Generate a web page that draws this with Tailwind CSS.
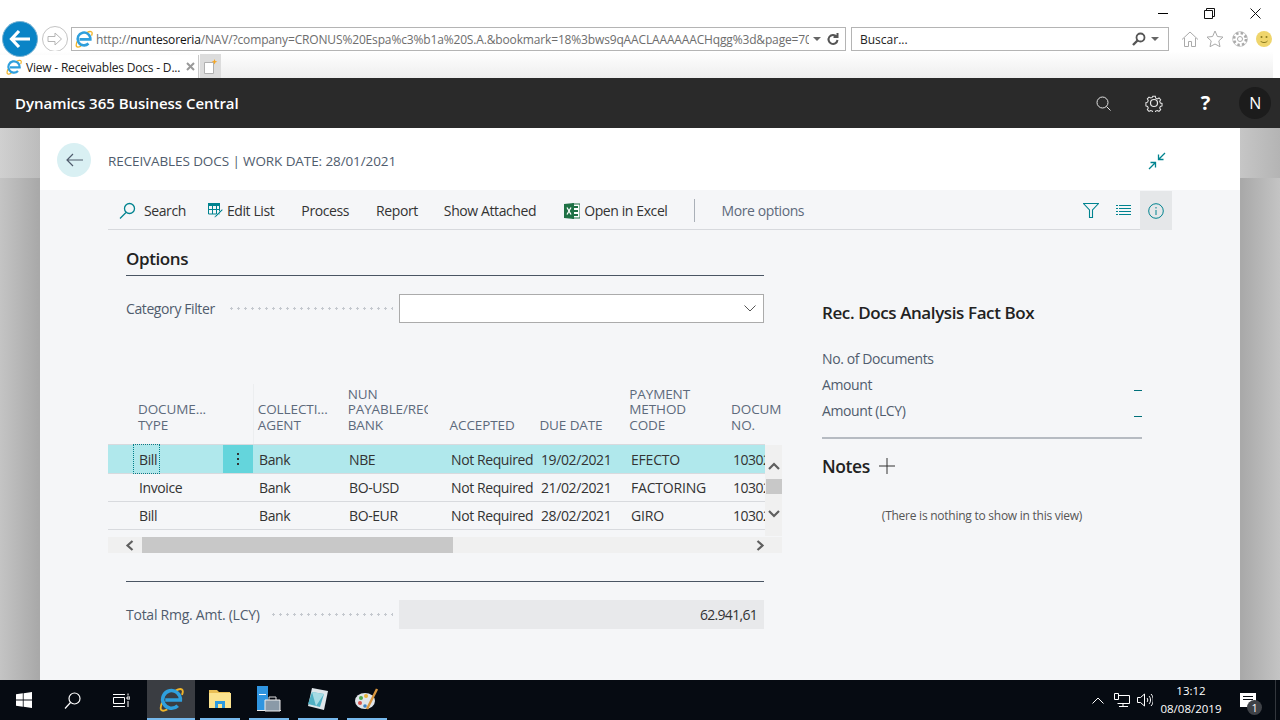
<!DOCTYPE html>
<html lang="en">
  <head>
    <meta charset="UTF-8" />
    <title>View - Receivables Docs - Dynamics 365 Business Central</title>
    <script src="https://cdn.jsdelivr.net/npm/@tailwindcss/browser@4"></script>
  </head>
  <body class="w-[1280px] h-[720px] overflow-hidden bg-white font-['Open_Sans','Liberation_Sans',sans-serif] text-[14px] tracking-[-0.4px] text-[#333]">
    <svg class="hidden">
      <symbol id="ie" viewBox="0 0 24 24">
        <path d="M3 15C0 22 2 24.500 8 21.500M16 3.500C21 .5 24.500 2 22 7.500" fill="none" stroke="#f0b429" stroke-width="1.800" />
        <path d="M6 12.500H20.500A8.500 8.500 0 1 0 18 18" fill="none" stroke="#2f9fdc" stroke-width="3.400" />
      </symbol>
    </svg>

    <!-- Browser chrome -->
    <div class="h-[78px] flex flex-col">
      <div class="h-[27px] flex justify-end items-start">
        <div class="w-[46px] h-[27px] flex items-center justify-center">
          <div class="w-[10px] h-px bg-black"></div>
        </div>
        <div class="w-[46px] h-[27px] flex items-center justify-center">
          <svg width="11" height="11" viewBox="0 0 11 11" fill="none" stroke="#111"><path d="M.5 2.500h8v8h-8zM2.500 2.500v-2h8v8h-2" /></svg>
        </div>
        <div class="w-[46px] h-[27px] flex items-center justify-center mr-[2px]">
          <svg width="11" height="11" viewBox="0 0 11 11" stroke="#111"><path d="M.5.500l10 10M10.500.500l-10 10" /></svg>
        </div>
      </div>
      <div class="h-[24px] flex items-center">
        <div class="ml-[2px] w-[36px] h-[36px] shrink-0 rounded-full bg-[#0a84c6] border border-[#7ab4d4] flex items-center justify-center relative z-10">
          <svg width="22" height="20" viewBox="0 0 22 20" fill="none" stroke="#fff" stroke-width="3.200"><path d="M10 2L2.500 10 10 18M3 10H21" /></svg>
        </div>
        <div class="ml-[4px] w-[26px] h-[26px] shrink-0 rounded-full border border-[#c4c4c4] flex items-center justify-center">
          <svg width="16" height="14" viewBox="0 0 16 14" fill="none" stroke="#b5b5b5"><path d="M1 4.500h7v-3.500l6.500 6-6.500 6v-3.500h-7z" /></svg>
        </div>
        <div class="ml-[3px] w-[775px] h-[24px] shrink-0 border border-[#b4b4b4] flex items-center text-[12px] tracking-[-0.15px]">
          <svg class="ml-[3px] shrink-0" width="18" height="18"><use href="#ie" /></svg>
          <div class="ml-[3px] pt-[2px] w-[713px] overflow-hidden whitespace-nowrap text-[#6d6d6d]">http://<span class="text-[#111]">nuntesoreria</span>/NAV/?company=CRONUS%20Espa%c3%b1a%20S.A.&amp;bookmark=18%3bws9qAACLAAAAAACHqgg%3d&amp;page=70</div>
          <div class="ml-[4px] w-0 h-0 border-x-[4px] border-x-transparent border-t-[4px] border-t-[#666]"></div>
          <svg class="ml-[6px]" width="12" height="13" viewBox="0 0 12 13" fill="none" stroke="#555" stroke-width="2"><path d="M9.500 3.500A4.500 4.500 0 1 0 10.500 7M10.500 0v4h-4" /></svg>
        </div>
        <div class="ml-[5px] w-[318px] h-[24px] shrink-0 border border-[#b4b4b4] flex items-center text-[12px] tracking-[0px] text-[#222]">
          <span class="ml-[8px] pt-[2px] flex-1">Buscar...</span>
          <svg width="14" height="14" viewBox="0 0 14 14" fill="none" stroke="#555"><circle cx="8.500" cy="5.500" r="4" stroke-width="1.800" /><path d="M5.500 8.500L1 13" stroke-width="2.400" /></svg>
          <div class="ml-[5px] mr-[9px] w-0 h-0 border-x-[4px] border-x-transparent border-t-[4px] border-t-[#666]"></div>
        </div>
        <div class="ml-[12px] flex items-center gap-[7px]">
          <svg width="18" height="18" viewBox="0 0 18 18" fill="none" stroke="#aaa"><path d="M1 9.500L9 2l8 7.500M3.500 8v8.500h4v-5h3v5h4V8" /></svg>
          <svg width="18" height="18" viewBox="0 0 18 18" fill="none" stroke="#aaa"><path d="M9 1l2.400 5.500 5.600.6-4.200 3.800 1.200 5.800L9 14l-5 2.700 1.200-5.800L1 7.100l5.600-.6z" /></svg>
          <svg width="18" height="18" viewBox="0 0 18 18" fill="none" stroke="#aaa"><circle cx="9" cy="9" r="2.500" /><circle cx="9" cy="9" r="6" stroke-width="2.600" stroke-dasharray="2.500 2.200" /><circle cx="9" cy="9" r="7.400" stroke-width=".6" /></svg>
          <svg width="16" height="16" viewBox="0 0 16 16" fill="none"><circle cx="8" cy="8" r="8" fill="#efd56c" /><circle cx="5.500" cy="6" r="1" fill="#8a7a20" /><circle cx="10.500" cy="6" r="1" fill="#8a7a20" /><path d="M4.500 10c1.500 2 5.500 2 7 0" stroke="#8a7a20" /></svg>
        </div>
      </div>
      <div class="flex-1 flex items-end bg-gradient-to-b from-white to-[#eeeeee] mr-[7px]">
        <div class="w-[199px] h-[23px] bg-white border-r border-[#c8c8c8] flex items-center text-[12px] tracking-[-0.2px] text-[#222]">
          <svg class="ml-[6px] shrink-0" width="16" height="16"><use href="#ie" /></svg>
          <span class="ml-[4px] pt-[2px] flex-1 whitespace-nowrap">View - Receivables Docs - D...</span>
          <svg class="mx-[6px] shrink-0" width="9" height="9" viewBox="0 0 9 9" stroke="#999" stroke-width="2"><path d="M1 1l7 7M8 1L1 8" /></svg>
        </div>
        <div class="ml-px w-[21px] h-[24px] bg-[#dcdcdc] flex items-center justify-center">
          <svg width="14" height="15" viewBox="0 0 14 15"><path d="M.5 3.500h9v11h-9z" fill="#fff" stroke="#b0b0b0" /><path d="M10.500 0l.8 2 2 .8-2 .8-.8 2-.8-2-2-.8 2-.8z" fill="#f5a623" /></svg>
        </div>
      </div>
    </div>

    <!-- App header -->
    <div class="h-[50px] bg-[#2a2a2a] flex items-center text-white">
      <div class="ml-[15px] flex-1 text-[15px] font-semibold tracking-[-0.03px]">Dynamics 365 Business Central</div>
      <svg class="mr-[34px]" width="15" height="15" viewBox="0 0 15 15" fill="none" stroke="#e4e4e4"><circle cx="6.500" cy="6.500" r="5.500" /><path d="M10.500 10.500l4 4" /></svg>
      <svg class="mr-[38px]" width="18" height="18" viewBox="0 0 18 18" fill="none" stroke="#e8e8e8" stroke-width="1.200"><circle cx="9" cy="9" r="3.500" /><path d="M7.500 1h3l.5 2.200 1.900.8 2-1.100 2 2.100-1.200 1.900.8 2 2 .6v2.900l-2 .6-.8 1.900 1.200 2-2 2-2-1.100-2 .8-.5 2h-3l-.5-2-1.900-.8-2 1.100-2-2 1.100-2-.8-1.900-2-.6V8.500l2-.6.8-2-1.100-1.900 2-2.100 2 1.100 1.900-.8z" transform="translate(1.500 1.500) scale(.84)" /></svg>
      <div class="mr-[29px] text-[20px] font-bold leading-none">?</div>
      <div class="mr-[9px] w-[32px] h-[32px] rounded-full bg-[#1c1c1c] flex items-center justify-center text-[16px]">N</div>
    </div>

    <!-- Page -->
    <div class="h-[552px] flex bg-[linear-gradient(90deg,#c4c4c4,#a9a9a9_3%,#a9a9a9_97%,#c4c4c4)]">
      <div class="w-[40px] shrink-0 flex flex-col"><div class="h-[50px] bg-[linear-gradient(90deg,#d0d0d0,#bcbcbc)]"></div></div>
      <div class="w-[1200px] shrink-0 flex flex-col bg-[#f5f6f8]">
        <div class="h-[62px] pt-[2px] bg-white flex items-center">
          <div class="ml-[17px] w-[34px] h-[34px] rounded-full bg-[#d9f0f3] flex items-center justify-center">
            <svg width="17" height="14" viewBox="0 0 17 14" fill="none" stroke="#505c6d" stroke-width="1.200"><path d="M7 1L1 7l6 6M1 7h16" /></svg>
          </div>
          <div class="ml-[17px] pt-[2px] flex-1 text-[13.500px] tracking-[-0.1px] text-[#505c6d]">RECEIVABLES DOCS | WORK DATE: 28/01/2021</div>
          <svg class="mr-[74px] mt-[2px]" width="18" height="18" viewBox="0 0 18 18" fill="none" stroke="#00838f" stroke-width="1.300"><path d="M1 17l6-6M2.500 10.500H7.500V15.500M17 1l-6 6M15.500 7.500H10.500V2.500" /></svg>
        </div>

        <!-- Action bar -->
        <div class="mx-[68px] h-[40px] pt-[2px] border-b border-[#d7d9dd] flex items-center text-[#333]">
          <svg class="ml-[11px]" width="17" height="17" viewBox="0 0 17 17" fill="none" stroke="#00838f" stroke-width="1.300"><circle cx="10.500" cy="6.500" r="5" /><path d="M7 10.500L1 16.500" /></svg>
          <span class="ml-[8px]">Search</span>
          <svg class="ml-[22px]" width="15" height="15" viewBox="0 0 15 15"><path d="M.5 1h11v10h-11z" fill="none" stroke="#00838f" /><path d="M0 0h12v3H0zM4 3h1v8H4zM8 3h1v8H8zM0 6h12v1H0z" fill="#00838f" /><path d="M7 13l7-7 1 1-7 7-2 .5z" fill="#00838f" stroke="#f5f6f8" stroke-width=".5" /></svg>
          <span class="ml-[4px]">Edit List</span>
          <span class="ml-[27px]">Process</span>
          <span class="ml-[27px]">Report</span>
          <span class="ml-[26px]">Show Attached</span>
          <svg class="ml-[28px]" width="16" height="16" viewBox="0 0 16 16"><path d="M8 1h8v14H8z" fill="#fff" stroke="#1e7145" /><path d="M10 3h4v2h-4zM10 7h4v2h-4zM10 11h4v2h-4z" fill="#1e7145" /><path d="M0 1l10-1v16L0 15z" fill="#1e7145" /><path d="M3 4.500l4 7M7 4.500l-4 7" stroke="#fff" stroke-width="1.300" /></svg>
          <span class="ml-[4px]">Open in Excel</span>
          <div class="ml-[27px] w-px h-[23px] bg-[#aab0b8]"></div>
          <span class="ml-[26px] text-[#5d6a7c]">More options</span>
          <div class="flex-1"></div>
          <svg width="16" height="15" viewBox="0 0 16 15" fill="none" stroke="#00838f" stroke-width="1.100"><path d="M.5.500h15l-6 6.500v7.500h-3V7z" /></svg>
          <svg class="ml-[17px]" width="15" height="11" viewBox="0 0 15 11" fill="none" stroke="#00838f"><path d="M0 .5h2M3 .5h12M0 3.500h2M3 3.500h12M0 6.500h2M3 6.500h12M0 9.500h2M3 9.500h12" /></svg>
          <div class="ml-[9px] -mt-[1px] w-[32px] h-[38px] box-content pt-[1px] bg-[#e5e7e9] flex items-center justify-center">
            <svg width="16" height="16" viewBox="0 0 16 16" fill="none" stroke="#00838f"><circle cx="8" cy="8" r="7.300" /><path d="M8 7v5M8 4v1.500" /></svg>
          </div>
        </div>

        <div class="ml-[68px] flex">
          <!-- Left column -->
          <div class="w-[674px] shrink-0">
            <div class="mx-[18px] w-[638px] h-[46px] border-b border-[#4a5563] flex items-end pb-[4px] text-[17px] font-semibold text-[#222]">Options</div>
            <div class="ml-[18px] w-[638px] h-[29px] mt-[18px] flex items-center text-[#505c6d]">
              <span class="whitespace-nowrap">Category Filter</span>
              <div class="ml-[13px] mr-[6px] flex-1 h-[3px] bg-[radial-gradient(circle,#c4c8ce_1px,transparent_1.200px)] bg-[length:7px_3px]"></div>
              <div class="w-[365px] h-[29px] shrink-0 bg-white border border-[#ababab] flex items-center justify-end pr-[7px]">
                <svg width="12" height="7" viewBox="0 0 12 7" fill="none" stroke="#555"><path d="M.5.500L6 6 11.500.500" /></svg>
              </div>
            </div>

            <!-- Grid header -->
            <div class="mt-[61px] h-[61px] flex items-end text-[13.500px] leading-[15.500px] tracking-[-0.1px] text-[#5d6a7c] uppercase">
              <div class="w-[145px] pl-[30px] pb-[12px] whitespace-nowrap">Docume...<br />Type</div>
              <div class="w-[90px] h-full border-l border-[#eceef0] pl-[4px] pb-[12px] flex flex-col justify-end whitespace-nowrap">Collecti...<br />Agent</div>
              <div class="w-[80px] ml-[5px] mr-[17px] pb-[12px] overflow-hidden whitespace-nowrap">Nun<br />Payable/Receiving<br />Bank</div>
              <div class="w-[90px] ml-[5px] -mr-[5px] pb-[12px] whitespace-nowrap">Accepted</div>
              <div class="w-[90px] ml-[5px] -mr-[5px] pb-[12px] whitespace-nowrap">Due Date</div>
              <div class="w-[102px] ml-[5px] -mr-[5px] pb-[12px] whitespace-nowrap">Payment<br />Method<br />Code</div>
              <div class="w-[51px] ml-[5px] pb-[12px] overflow-hidden whitespace-nowrap">Document<br />No.</div>
            </div>

            <!-- Grid rows -->
            <div class="flex h-[92px] text-[#333]">
              <div class="w-[657px] shrink-0">
                <div class="h-[28px] border-y border-[#d8dade] bg-[#b0e8ec] box-content flex items-stretch -mt-px">
                  <div class="w-[115px] pl-[26px] flex items-center"><span class="h-full flex items-center pl-[5px] w-[25px] outline-1 outline-dotted outline-[#00808a]">Bill</span></div>
                  <div class="w-[30px] bg-[#64d5dc] flex flex-col items-center justify-center gap-[3px]">
                    <div class="w-[2px] h-[2px] bg-[#333]"></div><div class="w-[2px] h-[2px] bg-[#333]"></div><div class="w-[2px] h-[2px] bg-[#333]"></div>
                  </div>
                  <div class="w-[90px] pl-[6px] flex items-center">Bank</div>
                  <div class="w-[102px] pl-[6px] flex items-center">NBE</div>
                  <div class="w-[90px] pl-[6px] flex items-center whitespace-nowrap">Not Required</div>
                  <div class="w-[90px] pl-[6px] flex items-center">19/02/2021</div>
                  <div class="w-[102px] pl-[6px] flex items-center tracking-[-0.2px]">EFECTO</div>
                  <div class="w-[38px] pl-[6px] flex items-center overflow-hidden tracking-[-0.5px]">103022</div>
                </div>
                <div class="h-[28px] border-b border-[#d8dade] flex items-stretch">
                  <div class="w-[145px] pl-[31px] flex items-center">Invoice</div>
                  <div class="w-[90px] pl-[6px] flex items-center">Bank</div>
                  <div class="w-[102px] pl-[6px] flex items-center">BO-USD</div>
                  <div class="w-[90px] pl-[6px] flex items-center whitespace-nowrap">Not Required</div>
                  <div class="w-[90px] pl-[6px] flex items-center">21/02/2021</div>
                  <div class="w-[102px] pl-[6px] flex items-center tracking-[-0.2px]">FACTORING</div>
                  <div class="w-[38px] pl-[6px] flex items-center overflow-hidden tracking-[-0.5px]">103022</div>
                </div>
                <div class="h-[28px] border-b border-[#d8dade] flex items-stretch">
                  <div class="w-[145px] pl-[31px] flex items-center">Bill</div>
                  <div class="w-[90px] pl-[6px] flex items-center">Bank</div>
                  <div class="w-[102px] pl-[6px] flex items-center">BO-EUR</div>
                  <div class="w-[90px] pl-[6px] flex items-center whitespace-nowrap">Not Required</div>
                  <div class="w-[90px] pl-[6px] flex items-center">28/02/2021</div>
                  <div class="w-[102px] pl-[6px] flex items-center tracking-[-0.2px]">GIRO</div>
                  <div class="w-[38px] pl-[6px] flex items-center overflow-hidden tracking-[-0.5px]">103022</div>
                </div>
              </div>
              <!-- Vertical scrollbar -->
              <div class="w-[17px] h-[91px] bg-[#f0f0f0] flex flex-col items-center">
                <svg class="mt-[17px]" width="12" height="8" viewBox="0 0 12 8" fill="none" stroke="#5f5f5f" stroke-width="2.200"><path d="M1 7l5-5 5 5" /></svg>
                <div class="mt-[9px] w-[16px] h-[15px] bg-[#c8c8c8]"></div>
                <svg class="mt-[16px]" width="12" height="8" viewBox="0 0 12 8" fill="none" stroke="#5f5f5f" stroke-width="2.200"><path d="M1 1l5 5 5-5" /></svg>
              </div>
            </div>
            <!-- Horizontal scrollbar -->
            <div class="h-[16px] bg-[#f0f0f0] flex items-center">
              <svg class="ml-[17px]" width="9" height="11" viewBox="0 0 9 11" fill="none" stroke="#5f5f5f" stroke-width="2.200"><path d="M7.500 1l-5 4.500 5 4.500" /></svg>
              <div class="ml-[8px] w-[311px] h-[16px] bg-[#c8c8c8]"></div>
              <svg class="ml-[303px]" width="9" height="11" viewBox="0 0 9 11" fill="none" stroke="#5f5f5f" stroke-width="2.200"><path d="M1.500 1l5 4.500-5 4.500" /></svg>
            </div>

            <div class="mx-[18px] w-[638px] mt-[28px] border-t border-[#4a5563]"></div>
            <div class="ml-[18px] w-[638px] h-[29px] mt-[18px] flex items-center text-[#505c6d]">
              <span class="whitespace-nowrap tracking-[-0.25px]">Total Rmg. Amt. (LCY)</span>
              <div class="ml-[10px] mr-[6px] flex-1 h-[3px] bg-[radial-gradient(circle,#c4c8ce_1px,transparent_1.200px)] bg-[length:7px_3px]"></div>
              <div class="w-[365px] h-[29px] shrink-0 bg-[#e8e9eb] flex items-center justify-end pr-[7px] text-[#333] tracking-[-0.7px]">62.941,61</div>
            </div>
          </div>

          <!-- Fact box -->
          <div class="ml-[40px] w-[320px] shrink-0">
            <div class="mt-[71px] h-[24px] flex items-center text-[17px] font-semibold text-[#222] whitespace-nowrap">Rec. Docs Analysis Fact Box</div>
            <div class="mt-[20px] h-[26px] flex items-center text-[#505c6d]">No. of Documents</div>
            <div class="h-[26px] flex items-center justify-between text-[#505c6d]">Amount<div class="w-[8px] h-px bg-[#00707a] mt-[12px]"></div></div>
            <div class="h-[26px] flex items-center justify-between text-[#505c6d]">Amount (LCY)<div class="w-[8px] h-px bg-[#00707a] mt-[12px]"></div></div>
            <div class="mt-[14px] border-t-2 border-[#b6bbc2]"></div>
            <div class="mt-[14px] h-[26px] flex items-center text-[17.500px] font-semibold text-[#222]">Notes
              <svg class="ml-[9px]" width="16" height="16" viewBox="0 0 16 16" stroke="#333"><path d="M0 8h16M8 0v16" /></svg>
            </div>
            <div class="mt-[28px] text-center text-[12px] tracking-[-0.25px] text-[#555]">(There is nothing to show in this view)</div>
          </div>
        </div>
      </div>
      <div class="w-[40px] shrink-0 flex flex-col"><div class="h-[50px] bg-[linear-gradient(90deg,#c6c6c6,#b4b4b4)]"></div></div>
    </div>

    <!-- Taskbar -->
    <div class="h-[40px] bg-[#060b12] flex items-stretch relative text-white">
      <div class="w-[48px] flex items-center justify-center">
        <svg width="16" height="16" viewBox="0 0 16 16" fill="#fff"><path d="M0 2.300l6.800-1v6.300H0zM7.600 1.200L16 0v7.600H7.600zM0 8.400h6.800v6.300l-6.800-1zM7.600 8.400H16V16l-8.400-1.200z" /></svg>
      </div>
      <div class="w-[48px] flex items-center justify-center">
        <svg width="17" height="17" viewBox="0 0 17 17" fill="none" stroke="#fff" stroke-width="1.200"><circle cx="10.500" cy="6.500" r="5.500" /><path d="M6.500 10.500L1 16.500" /></svg>
      </div>
      <div class="w-[51px] flex items-center justify-center">
        <svg width="17" height="15" viewBox="0 0 17 15" fill="none" stroke="#fff"><path d="M.5 4.500h11v6h-11zM0 1.500h12M0 13.500h12M15 .5v2M15 4h2v2h-3V4zM15 8v6" /></svg>
      </div>
      <div class="w-[48px] bg-[#3a3d42] border-b-2 border-[#76b9ed] flex items-center justify-center">
        <svg width="25" height="25"><use href="#ie" /></svg>
      </div>
      <div class="ml-[5px] w-[40px] border-b-2 border-[#76b9ed] flex items-center justify-center">
        <svg width="22" height="20" viewBox="0 0 22 20"><path d="M0 1h8l2 2h11v2H0z" fill="#e9bf55" /><path d="M0 4h22v15H0z" fill="#fbe38e" /><path d="M6 19v-7h10v7h-3v-4H9v4z" fill="#2d9be0" /></svg>
      </div>
      <div class="ml-[9px] w-[40px] border-b-2 border-[#76b9ed] flex items-center justify-center">
        <svg width="24" height="26" viewBox="0 0 24 26"><path d="M0 0h11v24H0z" fill="#2f95e0" /><path d="M2 8h7v1H2z" fill="#fff" /><path d="M0 24h24v1H0z" fill="#eee" /><path d="M8 14h15v11H8z" fill="#8a9aa8" stroke="#eee" /><path d="M12 14v-3h7v3" fill="none" stroke="#ddd" /></svg>
      </div>
      <div class="ml-[9px] w-[40px] border-b-2 border-[#76b9ed] flex items-center justify-center">
        <svg width="24" height="24" viewBox="0 0 24 24"><path d="M6 1l16 3-4 19-16-4z" fill="#dfe6ea" /><path d="M6 5l12 2-4 13-12-3z" fill="#4fb0c4" /><path d="M6 5l12 2-8 12z" fill="#a7dbe4" /></svg>
      </div>
      <div class="ml-[9px] w-[40px] border-b-2 border-[#76b9ed] flex items-center justify-center">
        <svg width="24" height="24" viewBox="0 0 24 24"><ellipse cx="10" cy="14" rx="10" ry="8" fill="#dfe5ea" /><circle cx="6" cy="11" r="2" fill="#4ca64c" /><circle cx="11" cy="9" r="2" fill="#e8b33a" /><circle cx="5" cy="16" r="2" fill="#d9534f" /><circle cx="10" cy="19" r="1.800" fill="#3b82c4" /><path d="M12 22L22 2" stroke="#d8963e" stroke-width="2.400" /></svg>
      </div>
      <div class="flex-1"></div>
      <svg class="self-center mr-[10px]" width="12" height="7" viewBox="0 0 12 7" fill="none" stroke="#fff"><path d="M.5 6.500L6 1l5.500 5.500" /></svg>
      <svg class="self-center mr-[7px]" width="16" height="14" viewBox="0 0 16 14" fill="none" stroke="#fff"><path d="M3.500 2.500H15.500V10.500H3.500M9 11v2M5 13.500h9" /><path d="M.5.500h4v6h-4z" fill="#060b12" /></svg>
      <svg class="self-center mr-[7px]" width="16" height="14" viewBox="0 0 16 14" fill="none" stroke="#fff"><path d="M.5 4.500h3l4-3.500v12l-4-3.500h-3zM10 5c1 1 1 3 0 4M12 3c2 2 2 6 0 8M14 1c3 3 3 9 0 12" /></svg>
      <div class="w-[62px] self-center text-center text-[11.500px] leading-[18px] tracking-[0px]">13:12<br />08/08/2019</div>
      <div class="w-[58px] flex items-center justify-center pr-[6px]">
        <div class="relative w-[16px] h-[14px] bg-white">
          <div class="absolute left-[3px] top-[3px] w-[10px] h-px bg-[#060b12]"></div>
          <div class="absolute left-[3px] top-[6px] w-[10px] h-px bg-[#060b12]"></div>
          <div class="absolute left-[7px] top-[7px] w-[15px] h-[15px] rounded-full bg-[#3f4247] text-[11px] leading-[15px] text-center">1</div>
        </div>
      </div>
      <div class="absolute right-[4px] top-0 w-px h-full bg-[#33373d]"></div>
    </div>
  </body>
</html>
